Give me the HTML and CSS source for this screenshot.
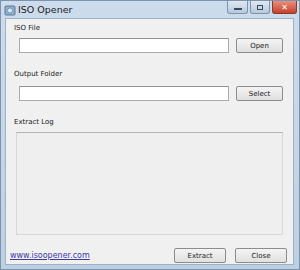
FILE: index.html
```html
<!DOCTYPE html>
<html lang="en">
<head>
    <meta charset="UTF-8">
    <title>ISO Opener</title>
    <link rel="stylesheet" href="styles.css">
</head>
<body>
    <div class="window">
        <div class="titlebar">
            <svg class="app-icon" width="12" height="12" viewBox="0 0 12 12">
                <rect x="1" y="2" width="10" height="9" rx="1" fill="#8fb0cf" stroke="#5a7896"/>
                <circle cx="6" cy="6.5" r="2.5" fill="#dfe9f3" stroke="#6a88a6" stroke-width="0.8"/>
            </svg>
            <span class="title">ISO Opener</span>
            <div class="caption-buttons">
                <div class="cap min"><span class="min-bar"></span></div>
                <div class="cap max"><span class="max-box"></span></div>
                <div class="cap close">&#x2715;</div>
            </div>
        </div>
        <div class="client">
            <label class="label">ISO File</label>
            <div class="row">
                <input type="text" class="field">
                <button class="btn">Open</button>
            </div>
            <label class="label">Output Folder</label>
            <div class="row">
                <input type="text" class="field">
                <button class="btn">Select</button>
            </div>
            <label class="label">Extract Log</label>
            <div class="log"></div>
            <div class="footer">
                <a class="link" href="#">www.isoopener.com</a>
                <div class="footer-buttons">
                    <button class="btn wide">Extract</button>
                    <button class="btn wide">Close</button>
                </div>
            </div>
        </div>
    </div>
</body>
</html>
```
FILE: styles.css
```css
body {
    margin: 0;
    background-color: #fff;
    font-family: "DejaVu Sans", "Noto Sans", sans-serif;
}
.window {
    width: 300px;
    height: 270px;
    box-sizing: border-box;
    background: linear-gradient(#cddcec, #bcd0e4);
    border: 1px solid #7d93ab;
    padding: 0 5px 4px 4px;
    display: flex;
    flex-direction: column;
}
.titlebar {
    height: 17px;
    flex-shrink: 0;
    display: flex;
    align-items: center;
    position: relative;
}
.app-icon {
    margin: 1px 2px 0 -1px;
}
.title {
    font-size: 9.5px;
    color: #1a1a1a;
}
.caption-buttons {
    position: absolute;
    right: -3px;
    top: 0;
    display: flex;
    gap: 2px;
}
.cap {
    height: 13px;
    border: 1px solid #7f93aa;
    border-top: none;
    box-sizing: border-box;
    display: flex;
    align-items: center;
    justify-content: center;
    border-radius: 0 0 3px 3px;
}
.min {
    width: 21px;
    background: linear-gradient(#dfe8f2, #b6c9de);
}
.min-bar {
    width: 8px;
    height: 2px;
    margin-top: 4px;
    background: #3c4a5c;
}
.max {
    width: 20px;
    background: linear-gradient(#dfe8f2, #b6c9de);
}
.max-box {
    width: 4px;
    height: 3px;
    border: 1px solid #3c4a5c;
}
.close {
    width: 25px;
    background: linear-gradient(#e89080, #c8402a);
    border-color: #8a3a2a;
    color: #fff;
    font-size: 8px;
    font-weight: bold;
}
.client {
    flex: 1;
    min-height: 0;
    background-color: #f0f0f0;
    border: 1px solid #9fb1c4;
    padding: 4px 8px 0 8px;
    display: flex;
    flex-direction: column;
}
.label {
    font-size: 7px;
    line-height: 10px;
    color: #222;
}
.row {
    display: flex;
    align-items: center;
    margin: 5px 0 16px 5px;
}
.row + .label + .row {
    margin-top: 7px;
}
.field {
    width: 210px;
    height: 15px;
    box-sizing: border-box;
    border: 1px solid #abadb3;
    border-top-color: #8e9298;
    background: #fff;
    margin: 0;
}
.btn {
    height: 15px;
    box-sizing: border-box;
    padding: 0;
    font-family: "DejaVu Sans", sans-serif;
    font-size: 7px;
    color: #222;
    background: linear-gradient(#f4f4f4, #e0e0e0);
    border: 1px solid #8c8c8c;
    border-radius: 2px;
}
.row .btn {
    width: 47px;
    margin-left: 7px;
}
.log {
    height: 101px;
    flex-shrink: 0;
    margin: 5px 2px 0 2px;
    border: 1px solid #d8d8d8;
    border-top-color: #b4b4b4;
    background: #efefef;
}
.footer {
    display: flex;
    align-items: center;
    justify-content: space-between;
    margin-top: 13px;
}
.link {
    font-size: 8px;
    color: #3a3aa0;
    text-decoration: underline;
    margin-left: -4px;
}
.footer-buttons {
    display: flex;
    gap: 11px;
}
.btn.wide {
    width: 52px;
    margin-right: -2px;
}
```
